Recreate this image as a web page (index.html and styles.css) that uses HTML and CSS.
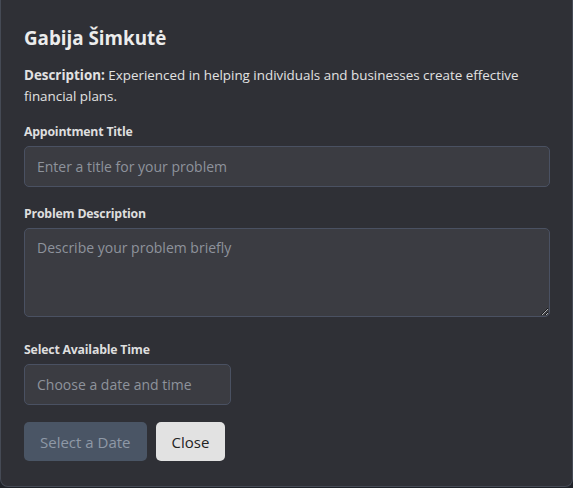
FILE: index.html
```html
<!DOCTYPE html>
<html>
<head>
<meta charset="utf-8">
<link rel="stylesheet" href="styles.css">
</head>
<body>
<div class="modal">
  <h2 class="name">Gabija Šimkutė</h2>
  <p class="desc"><strong>Description:</strong> Experienced in helping individuals and businesses create effective financial plans.</p>
  <div class="field">
    <label class="label">Appointment Title</label>
    <input class="control" type="text" placeholder="Enter a title for your problem">
  </div>
  <div class="field field-area">
    <label class="label">Problem Description</label>
    <textarea class="control area" placeholder="Describe your problem briefly"></textarea>
  </div>
  <div class="field">
    <label class="label">Select Available Time</label>
    <input class="control short" type="text" placeholder="Choose a date and time">
  </div>
  <div class="actions">
    <button class="btn btn-primary">Select a Date</button>
    <button class="btn btn-light">Close</button>
  </div>
</div>
</body>
</html>
```
FILE: styles.css
```css
* { box-sizing: border-box; }
html, body {
  margin: 0;
  background: #1f2228;
  font-family: "Open Sans", "Noto Sans", sans-serif;
}
.modal {
  width: 573px;
  height: 487px;
  background: #2f3036;
  border: 1px solid #454a55;
  border-top: none;
  border-radius: 0 0 8px 8px;
  padding: 26px 23px 0 23px;
  color: #e6e6e6;
}
.name {
  margin: 0 0 15px 0;
  font-size: 18.8px;
  font-weight: 700;
  line-height: 24px;
  color: #ececec;
}
.desc {
  margin: 0 0 16px 0;
  font-size: 13.4px;
  line-height: 21px;
  color: #e2e2e2;
}
.desc strong { font-weight: 700; }
.field {
  display: flex;
  flex-direction: column;
  margin-bottom: 18px;
}
.field-area { margin-bottom: 24px; }
.label {
  font-size: 12.3px;
  font-weight: 700;
  letter-spacing: -0.2px;
  line-height: 18px;
  margin-bottom: 5px;
  color: #dedede;
}
.control {
  width: 526px;
  height: 41px;
  background: #3b3c42;
  border: 1px solid #4a5162;
  border-radius: 5px;
  padding: 0 12px;
  font-family: inherit;
  font-size: 14px;
  color: #ddd;
  outline: none;
}
.control::placeholder { color: #8e939c; }
.area {
  height: 89px;
  padding-top: 9px;
  resize: vertical;
}
.short { width: 207px; }
.actions {
  display: flex;
  gap: 9px;
  margin-top: -1px;
}
.btn {
  height: 39px;
  border: none;
  border-radius: 5px;
  font-family: inherit;
  font-size: 15px;
  padding: 0 16px;
}
.btn-primary {
  background: #4a5565;
  color: #8f99a7;
}
.btn-light {
  background: #e2e2e2;
  color: #222;
}
```
